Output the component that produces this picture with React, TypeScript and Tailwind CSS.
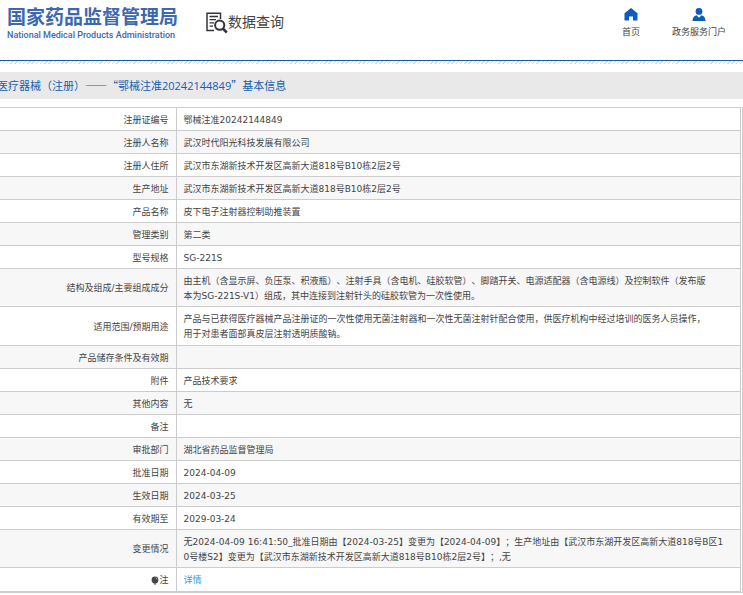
import { type ReactNode } from "react";
import { clsx } from "clsx";

type Row = {
  label: ReactNode;
  value: ReactNode;
  height?: string;
};

const rows: Row[] = [
  { label: "注册证编号", value: "鄂械注准20242144849" },
  { label: "注册人名称", value: "武汉时代阳光科技发展有限公司" },
  { label: "注册人住所", value: "武汉市东湖新技术开发区高新大道818号B10栋2层2号" },
  { label: "生产地址", value: "武汉市东湖新技术开发区高新大道818号B10栋2层2号" },
  { label: "产品名称", value: "皮下电子注射器控制助推装置" },
  { label: "管理类别", value: "第二类" },
  { label: "型号规格", value: "SG-221S" },
  {
    label: "结构及组成/主要组成成分",
    height: "h-[38px]",
    value: (
      <>
        由主机（含显示屏、负压泵、积液瓶）、注射手具（含电机、硅胶软管）、脚踏开关、电源适配器（含电源线）及控制软件（发布版
        <br />
        本为SG-221S-V1）组成，其中连接到注射针头的硅胶软管为一次性使用。
      </>
    ),
  },
  {
    label: "适用范围/预期用途",
    height: "h-[39px]",
    value: (
      <>
        产品与已获得医疗器械产品注册证的一次性使用无菌注射器和一次性无菌注射针配合使用，供医疗机构中经过培训的医务人员操作，
        <br />
        用于对患者面部真皮层注射透明质酸钠。
      </>
    ),
  },
  { label: "产品储存条件及有效期", value: "" },
  { label: "附件", value: "产品技术要求" },
  { label: "其他内容", value: "无" },
  { label: "备注", value: "" },
  { label: "审批部门", value: "湖北省药品监督管理局" },
  { label: "批准日期", value: "2024-04-09" },
  { label: "生效日期", value: "2024-03-25" },
  { label: "有效期至", value: "2029-03-24" },
  {
    label: "变更情况",
    height: "h-[38px]",
    value: (
      <>
        无2024-04-09 16:41:50_批准日期由【2024-03-25】变更为【2024-04-09】；生产地址由【武汉市东湖开发区高新大道818号B区1
        <br />
        0号楼S2】变更为【武汉市东湖新技术开发区高新大道818号B10栋2层2号】；,无
      </>
    ),
  },
  {
    label: (
      <span className="flex items-center justify-end">
        <NoteIcon />注
      </span>
    ),
    height: "h-[24px]",
    value: (
      <a href="#detail" className="text-[#3399ee]">
        详情
      </a>
    ),
  },
];

function NoteIcon() {
  return (
    <svg viewBox="0 0 8 10" className="h-[10px] w-2" aria-hidden="true">
      <circle cx="4" cy="4" r="3.4" fill="#444" />
      <path d="M2.8 7h2.4v1.6H2.8z" fill="#777" />
      <path d="M4.6 1.8c.8.2 1.3.7 1.4 1.5" stroke="#ddd" strokeWidth=".7" fill="none" />
    </svg>
  );
}

function SearchDocIcon() {
  return (
    <svg viewBox="0 0 22 22" className="h-[22px] w-[22px]" fill="none" stroke="#33333f" aria-hidden="true">
      <path d="M14.5 7V1.2H1v17.3h7" strokeWidth="1.5" />
      <path d="M3.5 4.5h8.5M3.5 7.7h6.5M3.5 10.9h4.5M3.5 14.1h3.5" strokeWidth="1.3" />
      <circle cx="13.7" cy="13.2" r="4.6" strokeWidth="2" />
      <path d="M17 16.7l3.8 3.8" strokeWidth="2.6" />
    </svg>
  );
}

function HomeIcon() {
  return (
    <svg viewBox="0 0 14 13" className="h-[13px] w-[14px]" fill="#0c5cb8" aria-hidden="true">
      <path d="M7 0L.5 5.2V12.5H5V8.4h4v4.1h4.5V5.2z" />
    </svg>
  );
}

function PersonIcon() {
  return (
    <svg viewBox="0 0 14 13" className="h-[13px] w-[14px]" fill="#0c5cb8" aria-hidden="true">
      <circle cx="7" cy="3.4" r="3.4" />
      <path d="M.5 13c0-3.2 1.3-5 4-5.8L7 9.8l2.5-2.6c2.7.8 4 2.6 4 5.8z" />
    </svg>
  );
}

function Header() {
  return (
    <header className="flex h-[61px] items-start justify-between border-b border-[#1c5a9c] pr-[17px]">
      <div className="flex">
        <a href="#top" className="block pl-[7px] pt-[5px] text-[#3c68b0]">
          <span className="block text-[19px] font-bold leading-[24px]">国家药品监督管理局</span>
          <span className="block font-['Roboto','Noto_Sans_CJK_SC',sans-serif] text-[9px] font-medium leading-[12px]">
            National Medical Products Administration
          </span>
        </a>
        <div className="flex items-start pl-[28px] pt-[12px]">
          <SearchDocIcon />
          <span className="text-[14px] leading-[20px] text-[#444]">数据查询</span>
        </div>
      </div>
      <nav className="flex gap-8 pt-2 text-[9px] leading-[14px] text-[#444]">
        <a href="#home" className="flex flex-col items-center gap-1">
          <HomeIcon />
          首页
        </a>
        <a href="#portal" className="flex flex-col items-center gap-1">
          <PersonIcon />
          政务服务门户
        </a>
      </nav>
    </header>
  );
}

export default function App() {
  return (
    <div
      lang="zh-CN"
      className="overflow-hidden bg-white font-['DejaVu_Sans','Noto_Sans_CJK_SC',sans-serif] [text-spacing-trim:space-all]"
    >
      <Header />
      <div className="h-[3px] bg-[repeating-linear-gradient(135deg,#c5e2f5_0_1px,#fff_1px_3px)]" />
      <h1 className="-ml-[3px] mt-2 bg-[#e9e9e9] font-['Noto_Sans_CJK_SC',sans-serif] text-[11px] leading-[27px] text-[#1260b0]">
        医疗器械（注册）——“鄂械注准
        <span className="font-['Open_Sans',sans-serif]">20242144849</span>”基本信息
      </h1>
      <main className="mt-2 border-b border-r border-[#ccc] pr-px">
        <table className="w-full border-collapse text-[9px] leading-[15px] text-[#444]">
          <tbody>
            {rows.map((row, i) => (
              <tr key={i} className={clsx("border-y border-[#ccc]", i % 2 === 1 && "bg-[#f7f7f7]", row.height ?? "h-[23px]")}>
                <th scope="row" className="w-[176px] border-r border-[#ccc] pl-2 pr-[7px] pt-[2px] text-right font-normal">
                  {row.label}
                </th>
                <td className="border-r border-[#ccc] pl-[7px] pt-[2px]">{row.value}</td>
              </tr>
            ))}
          </tbody>
        </table>
      </main>
    </div>
  );
}
